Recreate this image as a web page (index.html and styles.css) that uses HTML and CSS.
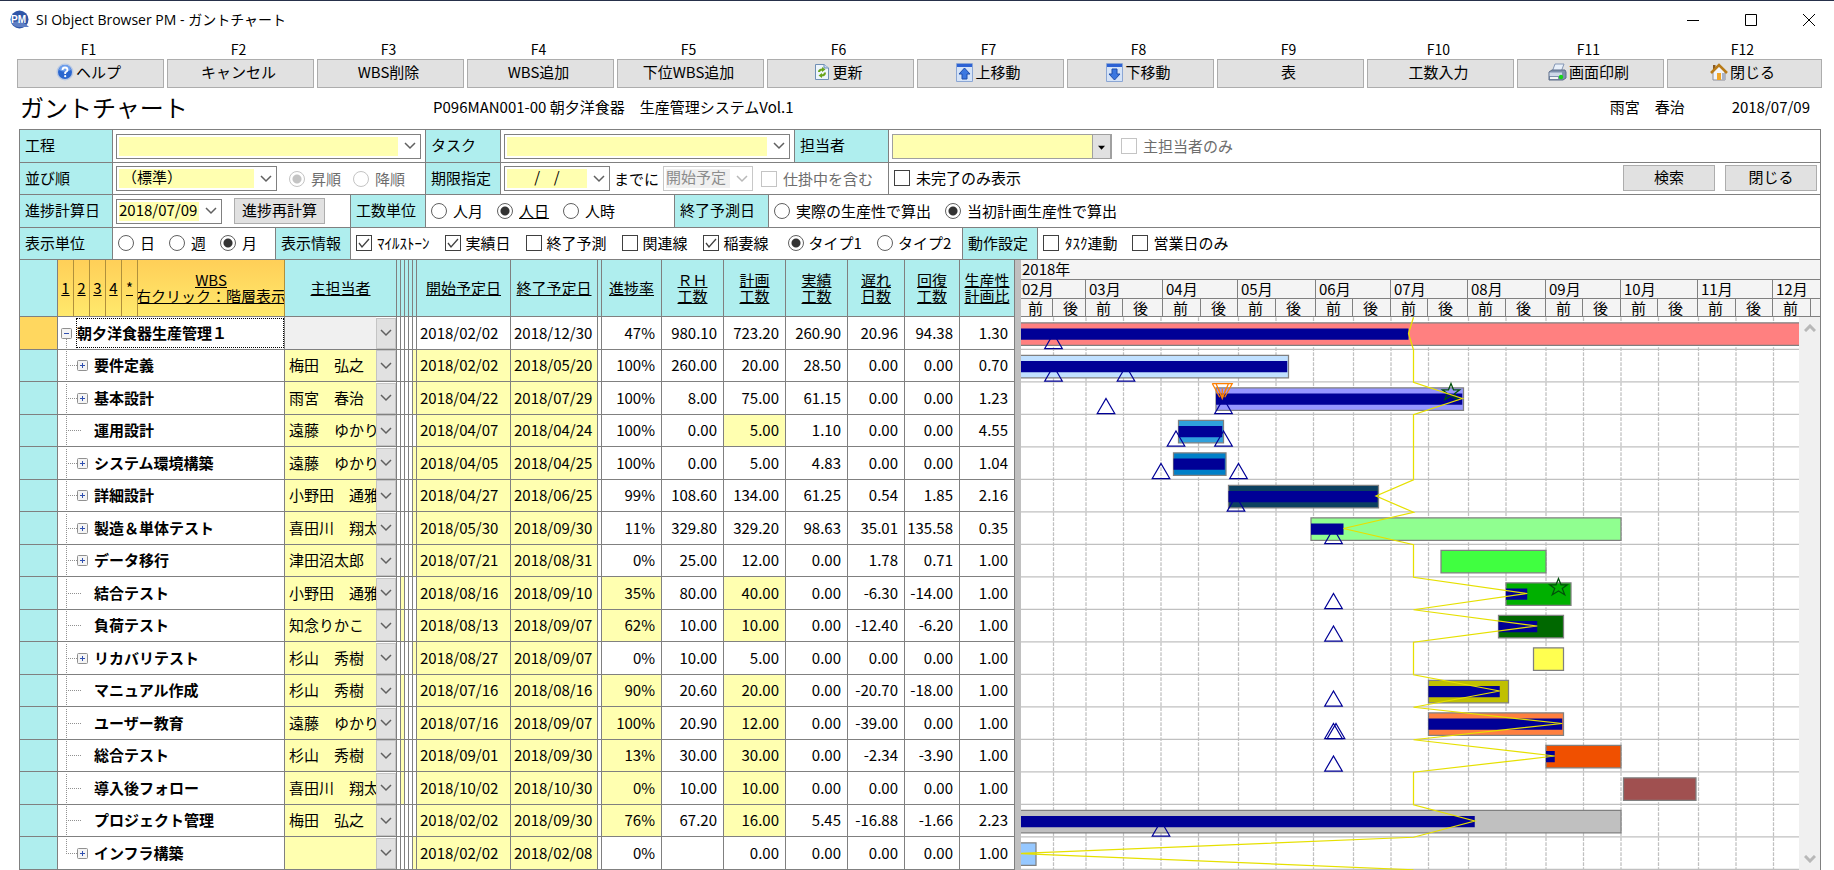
FILE: index.html
```html
<!DOCTYPE html>
<html lang="ja">
<head>
<meta charset="utf-8">
<title>SI Object Browser PM - ガントチャート</title>
<link rel="stylesheet" href="styles.css">
</head>
<body>
<header class="titlebar">
  <svg class="app-icon" width="20" height="20" viewBox="0 0 20 20"><circle cx="9.500" cy="9.500" r="9" fill="#2f56a8"/><path d="M2 13Q10 8 19 17H8Q3 16 2 13Z" fill="#5f7fc4"/><text x="1" y="13" class="app-icon-text">PM</text></svg>
  <span class="title-text">SI Object Browser PM - ガントチャート</span>
  <div class="window-buttons">
    <button type="button" aria-label="最小化"><svg width="14" height="14"><path d="M1 7.500H13" stroke="#000" fill="none"/></svg></button>
    <button type="button" aria-label="最大化"><svg width="14" height="14"><path d="M1.500 1.500H12.500V12.500H1.500Z" stroke="#000" fill="none"/></svg></button>
    <button type="button" aria-label="閉じる"><svg width="14" height="14"><path d="M1 1L13 13M13 1L1 13" stroke="#000" fill="none"/></svg></button>
  </div>
</header>

<nav class="fkeys">
  <div class="fkey"><span>F1</span><button type="button"><svg width="18" height="18" viewBox="0 0 18 18"><circle cx="9" cy="9" r="8.500" fill="#b9c9e4"/><circle cx="9" cy="9" r="7" fill="#2a66cf"/><path d="M3 7a6 5 0 0 1 12 0Q9 10 3 7Z" fill="#6fa0ee"/><path d="M6.500 7Q6.500 4.500 9 4.500T11.500 7Q11.500 8.200 9.200 9.500V11" fill="none" stroke="#fff" stroke-width="1.800"/><circle cx="9.200" cy="13.200" r="1.100" fill="#fff"/></svg>ヘルプ</button></div>
  <div class="fkey"><span>F2</span><button type="button">キャンセル</button></div>
  <div class="fkey"><span>F3</span><button type="button">WBS削除</button></div>
  <div class="fkey"><span>F4</span><button type="button">WBS追加</button></div>
  <div class="fkey"><span>F5</span><button type="button">下位WBS追加</button></div>
  <div class="fkey"><span>F6</span><button type="button"><svg width="16" height="18" viewBox="0 0 16 18"><path d="M1.500 1.500H10L14.500 5V16.500H1.500Z" fill="#eef5fc" stroke="#6f8fb5"/><path d="M10 1.500V5H14.500" fill="#c9dcf0" stroke="#6f8fb5"/><path d="M5 9Q5 6.500 8.500 6.500M11 9.500Q11 12.500 7.500 12.500" fill="none" stroke="#6aa51c" stroke-width="2"/><path d="M8 4L11.500 6.500L8 9ZM8 10L4.500 12.500L8 15Z" fill="#6aa51c"/></svg>更新</button></div>
  <div class="fkey"><span>F7</span><button type="button"><svg width="17" height="19" viewBox="0 0 17 19"><path d="M.5.500H16.500V18.500H.5Z" fill="#d5e3f7" stroke="#8ba6d4"/><path d="M1 1H16V4H1Z" fill="#2d62d4"/><path d="M8.500 5L14 11H11V16H6V11H3Z" fill="#3b77e0" stroke="#1d4cab"/></svg>上移動</button></div>
  <div class="fkey"><span>F8</span><button type="button"><svg width="17" height="19" viewBox="0 0 17 19"><path d="M.5.500H16.500V18.500H.5Z" fill="#d5e3f7" stroke="#8ba6d4"/><path d="M1 1H16V4H1Z" fill="#2d62d4"/><path d="M8.500 17L14 11H11V6H6V11H3Z" fill="#3b77e0" stroke="#1d4cab"/></svg>下移動</button></div>
  <div class="fkey"><span>F9</span><button type="button">表</button></div>
  <div class="fkey"><span>F10</span><button type="button">工数入力</button></div>
  <div class="fkey"><span>F11</span><button type="button"><svg width="19" height="18" viewBox="0 0 19 18"><path d="M7 1H16L13 9H4Z" fill="#e8f0fa" stroke="#8496b4"/><path d="M1 9L4 7H17L18 9V15L15 17H1Z" fill="#7f90ad" stroke="#5d6c88"/><path d="M1.500 9.500H14V13H1.500Z" fill="#cfd8e8"/><path d="M2 14H10V16H2Z" fill="#f5f5f5"/><circle cx="13" cy="14" r="2.200" fill="#16d616"/></svg>画面印刷</button></div>
  <div class="fkey"><span>F12</span><button type="button"><svg width="18" height="18" viewBox="0 0 18 18"><path d="M3 8L9 3L15 8V17H3Z" fill="#f2f4f8" stroke="#8d8d95"/><path d="M3 2H5.500V6L3 8Z" fill="#8a5a20"/><path d="M1 10L9 2L17 10" fill="none" stroke="#b87b18" stroke-width="2.600"/><path d="M7 10H11V17H7Z" fill="#f0a628"/><path d="M12 10H15V17H12Z" fill="#a9b2c6"/></svg>閉じる</button></div>
</nav>

<div class="heading">
  <h1>ガントチャート</h1>
  <div class="project">P096MAN001-00 朝夕洋食器　生産管理システムVol.1</div>
  <div class="user">雨宮　春治</div>
  <div class="today">2018/07/09</div>
</div>

<main class="panel">
<form class="filters">
  <div class="frow">
    <label class="cap cap-a" for="process">工程</label>
    <div class="cell cell-313 tight"><select id="process" class="combo grow"><option></option></select></div>
    <label class="cap cap-b" for="task">タスク</label>
    <div class="cell cell-294 tight"><select id="task" class="combo grow"><option></option></select></div>
    <label class="cap cap-c" for="member">担当者</label>
    <div class="cell rest tight member-cell"><select id="member" class="combo flat"><option></option></select><label class="opt off"><input type="checkbox" disabled>主担当者のみ</label></div>
  </div>
  <div class="frow">
    <label class="cap cap-a" for="order">並び順</label>
    <div class="cell cell-313 tight"><select id="order" class="combo w-161"><option>（標準）</option></select>
      <label class="opt off"><input type="radio" name="dir" disabled checked>昇順</label>
      <label class="opt off"><input type="radio" name="dir" disabled>降順</label></div>
    <label class="cap cap-b" for="limit">期限指定</label>
    <div class="cell cell-388 tight narrow-gap"><select id="limit" class="combo w-106 slashes"><option>&nbsp;/&nbsp;&nbsp;&nbsp;&nbsp;/</option></select><span>までに</span>
      <select class="combo w-90 off" disabled aria-label="期限の種類"><option>開始予定</option></select>
      <label class="opt off kind-opt"><input type="checkbox" disabled>仕掛中を含む</label></div>
    <div class="cell rest"><label class="opt"><input type="checkbox">未完了のみ表示</label>
      <div class="actions"><button type="button">検索</button><button type="button">閉じる</button></div></div>
  </div>
  <div class="frow">
    <label class="cap cap-a" for="calc">進捗計算日</label>
    <div class="cell cell-238 tight"><select id="calc" class="combo w-106"><option>2018/07/09</option></select><button type="button" class="recalc">進捗再計算</button></div>
    <span class="cap cap-b">工数単位</span>
    <div class="cell cell-249"><label class="opt"><input type="radio" name="unit">人月</label><label class="opt"><input type="radio" name="unit" checked><u>人日</u></label><label class="opt"><input type="radio" name="unit">人時</label></div>
    <span class="cap cap-c">終了予測日</span>
    <div class="cell rest"><label class="opt"><input type="radio" name="fc">実際の生産性で算出</label><label class="opt"><input type="radio" name="fc" checked>当初計画生産性で算出</label></div>
  </div>
  <div class="frow">
    <span class="cap cap-a">表示単位</span>
    <div class="cell cell-163"><label class="opt"><input type="radio" name="scale">日</label><label class="opt"><input type="radio" name="scale">週</label><label class="opt"><input type="radio" name="scale" checked>月</label></div>
    <span class="cap cap-b">表示情報</span>
    <div class="cell cell-612"><label class="opt"><input type="checkbox" checked>ﾏｲﾙｽﾄｰﾝ</label><label class="opt"><input type="checkbox" checked>実績日</label><label class="opt"><input type="checkbox">終了予測</label><label class="opt"><input type="checkbox">関連線</label><label class="opt"><input type="checkbox" checked>稲妻線</label><label class="opt gap-left"><input type="radio" name="type" checked>タイプ1</label><label class="opt"><input type="radio" name="type">タイプ2</label></div>
    <span class="cap cap-b">動作設定</span>
    <div class="cell rest"><label class="opt"><input type="checkbox">ﾀｽｸ連動</label><label class="opt"><input type="checkbox">営業日のみ</label></div>
  </div>
</form>

<div class="board">
  <table class="grid">
    <colgroup><col class="c-head"><col class="c-n"><col class="c-n"><col class="c-n"><col class="c-n"><col class="c-n"><col class="c-wbs"><col class="c-name"><col class="c-drop"><col class="c-thin"><col class="c-thin"><col class="c-thin"><col class="c-thin"><col class="c-thin"><col class="c-start"><col class="c-end"><col class="c-thin"><col class="c-pct"><col class="c-num"><col class="c-num"><col class="c-num"><col class="c-late"><col class="c-last"><col class="c-last"></colgroup>
    <thead><tr>
      <th></th><th class="gold">1</th><th class="gold">2</th><th class="gold">3</th><th class="gold">4</th><th class="gold">*</th>
      <th class="gold"><div class="wbs-head"><span>WBS</span><span>右クリック：階層表示</span></div></th>
      <th colspan="2">主担当者</th><th></th><th></th><th></th><th></th><th></th>
      <th>開始予定日</th><th>終了予定日</th><th></th><th>進捗率</th><th>ＲＨ<br>工数</th><th>計画<br>工数</th><th>実績<br>工数</th><th>遅れ<br>日数</th><th>回復<br>工数</th><th>生産性<br>計画比</th>
    </tr></thead>
    <tbody id="rows"></tbody>
  </table>
  <div class="splitter"></div>
  <section class="gantt">
    <div class="year">2018年</div>
    <div class="months"><span>02月</span><span>03月</span><span>04月</span><span>05月</span><span>06月</span><span>07月</span><span>08月</span><span>09月</span><span>10月</span><span>11月</span><span>12月</span></div>
    <div class="halves"><span>前</span><span>後</span><span>前</span><span>後</span><span>前</span><span>後</span><span>前</span><span>後</span><span>前</span><span>後</span><span>前</span><span>後</span><span>前</span><span>後</span><span>前</span><span>後</span><span>前</span><span>後</span><span>前</span><span>後</span><span>前</span><span></span></div>
    <div class="chart-body">
      <div class="chart-view"><svg id="chart" width="780" height="553" viewBox="0 0 624 442"></svg></div>
      <div class="scroll"><svg width="12" height="8"><path d="M1 7L6 2L11 7" fill="none" stroke="#b8b8b8" stroke-width="3"/></svg><svg width="12" height="8"><path d="M1 1L6 6L11 1" fill="none" stroke="#b8b8b8" stroke-width="3"/></svg></div>
    </div>
  </section>
</div>
</main>
<script src="app.js"></script>
</body>
</html>
```
FILE: styles.css
```css
* { box-sizing: border-box; }
body {
  margin: 0;
  overflow: hidden;
  background: #fff;
  color: #000;
  font-family: "Noto Sans CJK JP", "Noto Sans", sans-serif;
  font-size: 15px;
  line-height: 18px;
}
button, select, input { font: inherit; color: inherit; margin: 0; }
svg { flex: none; }

.titlebar {
  display: flex;
  align-items: center;
  gap: 6px;
  height: 40px;
  padding: 0 0 2px 10px;
  border-top: 1px solid #26304a;
}
.app-icon-text { font: bold 10px "Liberation Sans", sans-serif; fill: #fff; }
.title-text { font-family: "Open Sans", "Noto Sans CJK JP", sans-serif; font-size: 14px; }
.window-buttons { display: flex; margin-left: auto; margin-right: -4px; }
.window-buttons button { width: 58px; height: 37px; padding: 0; border: 0; background: none; }
.window-buttons svg { display: block; margin: 0 auto; }

.fkeys {
  display: grid;
  grid-template-columns: repeat(11, 147fr) 155fr;
  gap: 3px;
  padding: 0 12px 0 17px;
}
.fkey { display: flex; flex-direction: column; align-items: stretch; text-align: center; }
.fkey span { height: 19px; line-height: 19px; font-size: 14px; padding-right: 4px; }
.fkey button {
  display: flex;
  align-items: center;
  justify-content: center;
  gap: 2px;
  height: 29px;
  padding: 0 4px 3px 0;
}
.fkey button, .actions button, .recalc { border: 1px solid #adadad; background: #e1e1e1; }

.heading { display: flex; align-items: center; height: 41px; padding: 0 24px 4px 20px; }
h1 { flex: 0 0 413px; margin: 0; font-size: 24px; font-weight: 400; line-height: 30px; }
.user { margin-left: auto; width: 122px; }

.panel { margin: 0 13px 0 19px; }
.filters { border-left: 1px solid #808080; border-right: 1px solid #808080; }
.frow { display: flex; height: 33px; border-top: 1px solid #808080; }
.frow:nth-child(even) { height: 32px; }
.cap {
  flex: none;
  display: flex;
  align-items: center;
  padding: 0 0 2px 5px;
  background: #afeeee;
  border-right: 1px solid #808080;
}
.cap-a { width: 93px; }
.cap-b { width: 75px; }
.cap-c { width: 94px; }
.cell {
  flex: none;
  display: flex;
  align-items: center;
  gap: 14px;
  min-width: 0;
  padding: 0 5px 1px;
  border-right: 1px solid #808080;
  white-space: nowrap;
}
.tight { padding: 0 4px 0 3px; gap: 12px; }
.narrow-gap { gap: 4px; }
.member-cell { gap: 9px; }
.kind-opt { margin-left: 4px; }
.cell-313 { width: 313px; }
.cell-294 { width: 294px; }
.cell-388 { width: 388px; }
.cell-238 { width: 238px; }
.cell-249 { width: 249px; }
.cell-163 { width: 163px; }
.cell-612 { width: 612px; gap: 15px; }
.rest { flex: 1; border-right: 0; }
.opt { display: flex; align-items: center; gap: 6px; }
.cell-612 .opt { gap: 5px; }
.cell-612 .gap-left { margin-left: 4px; }
.off { color: #6d6d6d; }

input[type="radio"], input[type="checkbox"] {
  appearance: none;
  flex: none;
  width: 16px;
  height: 16px;
  border: 1px solid #404040;
  background: #fff;
}
input[type="radio"] { border-radius: 50%; border-color: #606060; }
input[type="radio"]:checked { background: radial-gradient(circle, #333 0 4px, #fff 5px); }
input[type="checkbox"]:checked {
  background: url("data:image/svg+xml,%3Csvg xmlns='http://www.w3.org/2000/svg' width='14' height='14'%3E%3Cpath d='M2 7l3 4 7-8' fill='none' stroke='%23404040' stroke-width='1.300'/%3E%3C/svg%3E") center no-repeat;
}
input[type="radio"]:disabled, input[type="checkbox"]:disabled { border-color: #c4c4c4; }
input[type="radio"]:disabled:checked { background: radial-gradient(circle, #c4c4c4 0 4px, #fff 5px); }

.combo {
  appearance: none;
  height: 25px;
  padding: 0 24px 3px 5px;
  border: 1px solid #808080;
  border-radius: 0;
  outline: none;
  background:
    url("data:image/svg+xml,%3Csvg xmlns='http://www.w3.org/2000/svg' width='12' height='8'%3E%3Cpath d='M1 1l5 5 5-5' fill='none' stroke='%23606060' stroke-width='1.500'/%3E%3C/svg%3E") right 4px center no-repeat,
    linear-gradient(#ffffb0, #ffffb0) 2px 2px / calc(100% - 24px) calc(100% - 4px) no-repeat #fff;
}
.combo:disabled {
  opacity: 1;
  color: #8c8c8c;
  border-color: #c8c8c8;
  background:
    url("data:image/svg+xml,%3Csvg xmlns='http://www.w3.org/2000/svg' width='12' height='8'%3E%3Cpath d='M1 1l5 5 5-5' fill='none' stroke='%23b8b8b8' stroke-width='1.500'/%3E%3C/svg%3E") right 4px center no-repeat,
    linear-gradient(#f0f0f0, #f0f0f0) 2px 2px / calc(100% - 24px) calc(100% - 4px) no-repeat #fff;
}
.grow { flex: 1; }
.w-161 { width: 161px; }
.w-106 { width: 106px; padding-left: 2px; padding-right: 20px; }
.w-90 { width: 90px; padding: 0 10px 3px 2px; }
.slashes { padding-left: 26px; }
.flat {
  width: 220px;
  border-color: #a0a0a0;
  background:
    url("data:image/svg+xml,%3Csvg xmlns='http://www.w3.org/2000/svg' width='19' height='24'%3E%3Cpath d='M.5 0V24M18.500 0V24' stroke='%23a0a0a0'/%3E%3Cpath d='M1 0h17v24H1z' fill='%23e1e1e1'/%3E%3Cpath d='M6 11h7l-3.500 4z'/%3E%3C/svg%3E") right center no-repeat #ffffb0;
}
.actions { display: flex; gap: 10px; margin-left: auto; }
.actions button { width: 92px; height: 26px; padding: 0 0 2px; }
.cell:has(.actions) { padding-right: 3px; }
.recalc { width: 91px; height: 26px; padding: 0 0 2px; }

.board { display: flex; align-items: stretch; border-top: 1px solid #808080; }
.grid {
  flex: none;
  width: 996px;
  table-layout: fixed;
  border-collapse: separate;
  border-spacing: 0;
  border-left: 1px solid #808080;
}
.c-head { width: 38px; }
.c-n { width: 16px; }
.c-wbs { width: 147px; }
.c-name { width: 91px; }
.c-drop { width: 21px; }
.c-thin { width: 4px; }
.c-start { width: 94px; }
.c-end { width: 87px; }
.c-pct { width: 60px; }
.c-num { width: 62px; }
.c-late { width: 57px; }
.c-last { width: 55px; }
.grid th, .grid td { padding: 0; overflow: hidden; white-space: nowrap; border-right: 1px solid #808080; border-bottom: 1px solid #808080; }
.grid th {
  height: 57px;
  background: #afeeee;
  font-weight: 400;
  line-height: 16px;
  text-decoration: underline;
}
.grid th.gold { background: linear-gradient(#ffcf58, #ffe96c); border-right-color: #b0903c; }
.wbs-head { display: flex; flex-direction: column; align-items: center; overflow: hidden; }
.wbs-head span { text-decoration: underline; }
.grid td { height: 33px; padding-bottom: 1px; }
.grid tr:nth-child(even) td { height: 32px; }
.grid td.rowhead { background: #afeeee; }
.grid tr:first-child td.rowhead { background: #ffd75f; }
.grid td:has(.tree), .grid td:has(.drop) { padding: 0; }
.tree { display: flex; align-items: center; height: 31px; line-height: 30px; font-weight: 700; overflow: hidden; }
.tree svg { margin-right: 1px; }
.tree-name { height: 31px; }
.focus { flex: 1; height: 30px; line-height: 27px; border: 1px dotted #000; }
.grid td.name { padding-left: 4px; border-right: 0; }
.drop { display: flex; align-items: center; justify-content: center; width: 100%; height: 31px; padding: 0; border: 1px solid #c4c4c4; background: #e1e1e1; }
.grid td.num { text-align: right; padding-right: 6px; }
.grid td.date { padding-left: 3px; }
.grid td.edit { background: #ffffb0; }
.grid td.gray { background: #f0f0f0; }

.splitter { flex: 0 0 6px; background: #c0c0c0; }
.gantt { flex: 1; min-width: 0; border-right: 1px solid #808080; }
.year, .months, .halves { background: #f4f4f4; border-bottom: 1px solid #808080; overflow: hidden; }
.year { height: 20px; line-height: 18px; padding-left: 1px; }
.months, .halves { display: grid; height: 19px; line-height: 17px; }
.halves { height: 18px; }
.months { grid-template-columns: 65px 77px 75px 78px 75px 77px 78px 75px 77px 75px 1fr; }
.halves { grid-template-columns: 32px 33px 37px 40px 38px 37px 38px 40px 37px 38px 37px 40px 38px 40px 37px 38px 37px 40px 38px 37px 38px 1fr; }
.months span, .halves span { border-right: 1px solid #808080; overflow: hidden; }
.months span { padding-left: 3px; }
.months span:first-child { padding-left: 1px; }
.months span:last-child, .halves span:last-child { border-right: 0; }
.halves span { padding-left: 10px; }
.halves span:first-child { padding-left: 7px; }
.chart-body { display: flex; }
.chart-view { flex: 1; min-width: 0; overflow: hidden; }
.chart-view svg { display: block; }
.scroll { flex: 0 0 21px; display: flex; flex-direction: column; align-items: center; justify-content: space-between; padding: 7px 0; background: #f0f0f0; }

.gridline { stroke: #c0c0c0; fill: none; }
.dashed { stroke-dasharray: 3 1; }
.frame { stroke: #808080; }
.done { fill: #000096; }
.mark { fill: none; stroke: #000096; }
.alarm { fill: none; stroke: #ff8000; }
.star { fill: none; stroke: #00500a; }
.bolt { fill: none; stroke: #e6e000; }
```
FILE: app.js
```js
// kind: box = collapsed node, leaf = no children, root = top node
// thin: index of the highlighted narrow column, v: pct, RH, plan, actual, late, recovery, ratio
const tasks = [
  { name: '朝夕洋食器生産管理１', kind: 'root', who: '', from: '2018/02/02', to: '2018/12/30', v: ['47%', '980.10', '723.20', '260.90', '20.96', '94.38', '1.30'], bar: [-2, 640, '#ff8080'], done: 310, tip: 310, marks: [26] },
  { name: '要件定義', kind: 'box', who: '梅田　弘之', from: '2018/02/02', to: '2018/05/20', thin: 4, v: ['100%', '260.00', '20.00', '28.50', '0.00', '0.00', '0.70'], bar: [-2, 214, '#c0e0ff'], done: 213, marks: [26, 84] },
  { name: '基本設計', kind: 'box', who: '雨宮　春治', from: '2018/04/22', to: '2018/07/29', thin: 4, v: ['100%', '8.00', '75.00', '61.15', '0.00', '0.00', '1.23'], bar: [156, 354, '#9696ff'], done: 353, tip: 353, marks: [68, 162], alarm: 161, star: 344 },
  { name: '運用設計', kind: 'leaf', who: '遠藤　ゆかり', from: '2018/04/07', to: '2018/04/24', plan: 1, v: ['100%', '0.00', '5.00', '1.10', '0.00', '0.00', '4.55'], bar: [126, 162, '#30a0dc'], done: 161, marks: [124, 162] },
  { name: 'システム環境構築', kind: 'box', who: '遠藤　ゆかり', from: '2018/04/05', to: '2018/04/25', thin: 4, v: ['100%', '0.00', '5.00', '4.83', '0.00', '0.00', '1.04'], bar: [122, 164, '#0080c8'], done: 163, marks: [112, 174] },
  { name: '詳細設計', kind: 'box', who: '小野田　通雅', from: '2018/04/27', to: '2018/06/25', thin: 4, v: ['99%', '108.60', '134.00', '61.25', '0.54', '1.85', '2.16'], bar: [166, 286, '#0c4060'], done: 285, tip: 284, marks: [172] },
  { name: '製造＆単体テスト', kind: 'box', who: '喜田川　翔太', from: '2018/05/30', to: '2018/09/30', thin: 4, v: ['11%', '329.80', '329.20', '98.63', '35.01', '135.58', '0.35'], bar: [232, 480, '#90ff90'], done: 258, tip: 258, marks: [250] },
  { name: 'データ移行', kind: 'box', who: '津田沼太郎', from: '2018/07/21', to: '2018/08/31', thin: 4, v: ['0%', '25.00', '12.00', '0.00', '1.78', '0.71', '1.00'], bar: [336, 420, '#40ff40'] },
  { name: '結合テスト', kind: 'leaf', who: '小野田　通雅', from: '2018/08/16', to: '2018/09/10', thin: 1, plan: 1, pct: 1, v: ['35%', '80.00', '40.00', '0.00', '-6.30', '-14.00', '1.00'], bar: [388, 440, '#00b000'], done: 405, tip: 405, marks: [250], star: 430 },
  { name: '負荷テスト', kind: 'leaf', who: '知念りかこ', from: '2018/08/13', to: '2018/09/07', thin: 1, plan: 1, pct: 1, v: ['62%', '10.00', '10.00', '0.00', '-12.40', '-6.20', '1.00'], bar: [382, 434, '#006800'], done: 413, tip: 413, marks: [250] },
  { name: 'リカバリテスト', kind: 'box', who: '杉山　秀樹', from: '2018/08/27', to: '2018/09/07', thin: 4, v: ['0%', '10.00', '5.00', '0.00', '0.00', '0.00', '1.00'], bar: [410, 434, '#ffff50'] },
  { name: 'マニュアル作成', kind: 'leaf', who: '杉山　秀樹', from: '2018/07/16', to: '2018/08/16', thin: 1, plan: 1, pct: 1, v: ['90%', '20.60', '20.00', '0.00', '-20.70', '-18.00', '1.00'], bar: [326, 390, '#c0c000'], done: 383, tip: 383, marks: [250] },
  { name: 'ユーザー教育', kind: 'leaf', who: '遠藤　ゆかり', from: '2018/07/16', to: '2018/09/07', thin: 1, plan: 1, pct: 1, v: ['100%', '20.90', '12.00', '0.00', '-39.00', '0.00', '1.00'], bar: [326, 434, '#ff8040'], done: 433, tip: 433, marks: [250, 252] },
  { name: '総合テスト', kind: 'leaf', who: '杉山　秀樹', from: '2018/09/01', to: '2018/09/30', thin: 1, plan: 1, pct: 1, v: ['13%', '30.00', '30.00', '0.00', '-2.34', '-3.90', '1.00'], bar: [420, 480, '#f05000'], done: 427, tip: 427, marks: [250] },
  { name: '導入後フォロー', kind: 'leaf', who: '喜田川　翔太', from: '2018/10/02', to: '2018/10/30', thin: 1, plan: 1, pct: 1, v: ['0%', '10.00', '10.00', '0.00', '0.00', '0.00', '1.00'], bar: [482, 540, '#a05050'] },
  { name: 'プロジェクト管理', kind: 'leaf', who: '梅田　弘之', from: '2018/02/02', to: '2018/09/30', plan: 1, pct: 1, v: ['76%', '67.20', '16.00', '5.45', '-16.88', '-1.66', '2.23'], bar: [-2, 480, '#c0c0c0'], done: 363, tip: 363, marks: [112] },
  { name: 'インフラ構築', kind: 'box', who: '', from: '2018/02/02', to: '2018/02/08', thin: 4, v: ['0%', '', '0.00', '0.00', '0.00', '0.00', '1.00'], bar: [-2, 12, '#96c8ff'], tip: 0 }
];

const box = (x, plus) => `<rect x="${x}.5" y="11.5" width="10" height="10" rx="1" fill="#f4f4f4" stroke="#909090"/><path d="M${x + 3} 16.5h5${plus ? `M${x + 5}.5 14v5` : ''}" stroke="#3050b0"/>`;
const tree = (t, last) => {
  if (t.kind === 'root') {
    return `<div class="tree"><svg width="17" height="33">${box(3, false)}<path d="M8.5 22V33" stroke="#909090" stroke-dasharray="1 1"/></svg><span class="focus">${t.name}</span></div>`;
  }
  return `<div class="tree"><svg width="35" height="33"><path d="M8.5 0V${last ? 16 : 33}M8 16.5H24" stroke="#909090" stroke-dasharray="1 1" fill="none"/>${t.kind === 'box' ? box(19, true) : ''}</svg><span class="tree-name">${t.name}</span></div>`;
};
const chevron = '<svg width="12" height="8"><path d="M1 1L6 6L11 1" fill="none" stroke="#606060" stroke-width="1.5"/></svg>';

document.getElementById('rows').innerHTML = tasks.map((t, i) => {
  const thin = [0, 1, 2, 3, 4].map(k => `<td class="${t.thin === k ? 'edit' : ''}"></td>`).join('');
  const hot = i > 0 ? 'edit' : '';
  const nums = t.v.map((n, k) => `<td class="num ${(k === 0 && t.pct) || (k === 2 && t.plan) ? 'edit' : ''}">${n}</td>`).join('');
  return `<tr><td class="rowhead"></td><td colspan="6">${tree(t, i === tasks.length - 1)}</td><td class="name ${i ? 'edit' : 'gray'}">${t.who}</td><td><button type="button" class="drop" aria-label="担当者を選択">${chevron}</button></td>${thin}<td class="date ${hot}">${t.from}</td><td class="date ${hot}">${t.to}</td><td></td>${nums}</tr>`;
}).join('');

// One chart unit is half a day wide; a row is 26 units high.
const H = 26, TODAY = 314;
let svg = '';
[26, 52, 82, 112, 142, 174, 204, 234, 266, 296, 326, 358, 388, 420, 450, 480, 510, 542, 572, 602].forEach(x => {
  svg += `<path class="gridline dashed" d="M${x} 0V442"/>`;
});
let bolt = `M${TODAY} 0`;
tasks.forEach((t, i) => {
  const y = i * H;
  svg += `<path class="gridline" d="M0 ${y + H - 0.4}H624"/>`;
  svg += `<rect class="frame" x="${t.bar[0]}" y="${y + 4.5}" width="${t.bar[1] - t.bar[0]}" height="18" fill="${t.bar[2]}"/>`;
  if (t.done) svg += `<rect class="done" x="${t.bar[0]}" y="${y + 9}" width="${t.done - t.bar[0]}" height="9"/>`;
  (t.marks || []).forEach(x => { svg += `<path class="mark" d="M${x} ${y + 13}L${x + 7} ${y + 25}H${x - 7}Z"/>`; });
  if (t.alarm) {
    const a = t.alarm;
    svg += `<path class="alarm" d="M${a - 8} ${y + 1}H${a + 8}L${a + 2} ${y + 12}M${a - 8} ${y + 1}L${a - 2} ${y + 12}M${a - 5} ${y + 1}L${a} ${y + 13}L${a + 5} ${y + 1}M${a - 3} ${y + 5}L${a} ${y + 13}L${a + 3} ${y + 5}M${a} ${y + 5}V${y + 13}"/>`;
  }
  if (t.star) svg += `<path class="star" transform="translate(${t.star} ${y})" d="M0 1L2 6H7L3 9L5 14L0 11L-5 14L-3 9L-7 6H-2Z"/>`;
  if (t.tip !== undefined) bolt += `L${t.tip} ${y + 13}`;
  bolt += `L${TODAY} ${y + H}`;
});
svg += `<path class="bolt" d="${bolt}"/>`;
document.getElementById('chart').innerHTML = svg;
```
